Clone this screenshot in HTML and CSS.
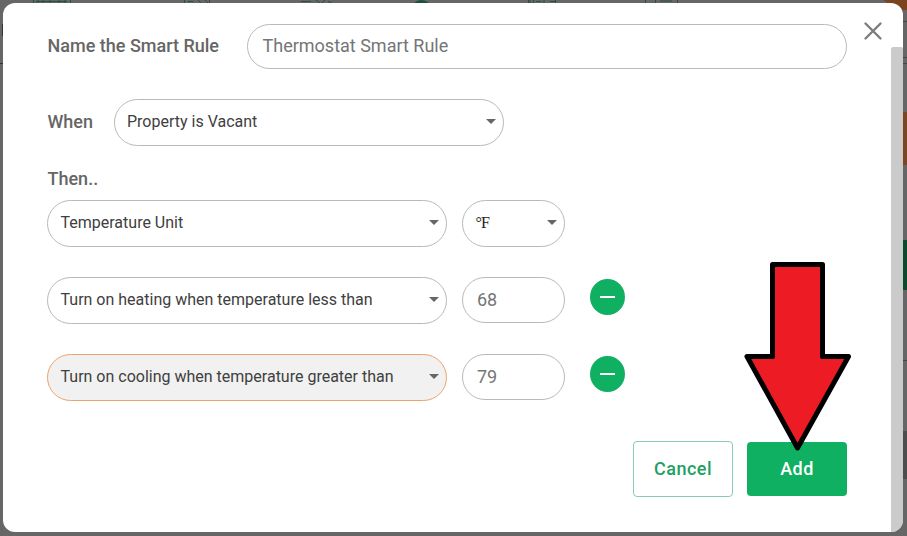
FILE: index.html
```html
<!DOCTYPE html>
<html lang="en">
<head>
    <meta charset="UTF-8">
    <meta name="viewport" content="width=device-width, initial-scale=1.0">
    <title>Smart Rule</title>
    <link rel="stylesheet" href="styles.css">
</head>
<body>

    <!-- Dimmed page behind the modal -->
    <svg class="backdrop" width="907" height="536" viewBox="0 0 907 536">
        <g fill="none" stroke="#28503f" stroke-width="1">
            <path d="M33.500 0V3M36 1.500H67M38 0V3M43 0V3M50 0V3M59 0V3M65 0V3M70.500 0V3"/>
            <path d="M184.500 0V3M188 1.500H193M198 0L201 3M205 0L208 3M209.500 0V3"/>
            <path d="M301 1.500H311M316 0L320 3M325 0L322 3M328 1.500L332 3"/>
            <path d="M528.500 0V3M530 0V3M533.500 0V3M536 1.500H541M544 0V3M550 1.500H556M555.500 0V3"/>
            <path d="M645.500 0V3M655.500 0V3M660 1H672M677.500 0V3"/>
        </g>
        <path d="M414 3Q421-3 429 3Z" fill="#1d5039"/>
        <path d="M883 0H907V10H898Z" fill="#7b4421"/>
        <path d="M2 24H3V36H2ZM0 63H3V64H0Z" fill="#333"/>
        <path d="M903 21H907V22H903ZM903 57H907V58H903ZM903 63H907V64H903ZM903 360H907V361H903Z" fill="#444"/>
        <rect x="903" y="112" width="4" height="53" fill="#7b4624"/>
        <rect x="903" y="240" width="4" height="50" fill="#0b4b2c"/>
        <rect x="903" y="431" width="4" height="48" fill="#4d4d4d"/>
    </svg>

    <div class="modal">
        <form class="rule-form">
            <div class="row name-row">
                <label class="label">Name the Smart Rule</label>
                <div class="field name-field">Thermostat Smart Rule</div>
            </div>

            <div class="row when-row">
                <label class="label">When</label>
                <div class="select when-select">Property is Vacant<span class="caret"></span></div>
            </div>

            <div class="label then-label">Then..</div>

            <div class="row rule-row">
                <div class="select rule-select">Temperature Unit<span class="caret"></span></div>
                <div class="select unit-select">°F<span class="caret"></span></div>
            </div>

            <div class="row rule-row">
                <div class="select rule-select">Turn on heating when temperature less than<span class="caret"></span></div>
                <div class="field value-field">68</div>
                <button type="button" class="remove-btn" aria-label="Remove"></button>
            </div>

            <div class="row rule-row">
                <div class="select rule-select focused">Turn on cooling when temperature greater than<span class="caret"></span></div>
                <div class="field value-field">79</div>
                <button type="button" class="remove-btn" aria-label="Remove"></button>
            </div>

            <div class="actions">
                <button type="button" class="btn cancel-btn">Cancel</button>
                <button type="button" class="btn add-btn">Add</button>
            </div>
        </form>

        <div class="side">
            <svg class="close" width="20" height="20" viewBox="0 0 20 20">
                <path d="M2.500 2.500L17.500 17.500M17.500 2.500L2.500 17.500"/>
            </svg>
            <div class="scrollbar"></div>
        </div>
    </div>

    <!-- Arrow pointing at the Add button -->
    <svg class="arrow" width="110" height="194" viewBox="0 0 110 194">
        <path d="M29.500 4.500H79.500V96.500H105.500L54.500 188L4 96.500H29.500Z"/>
    </svg>

</body>
</html>
```
FILE: styles.css
```css
* {
    box-sizing: border-box;
}
body {
    margin: 0;
    padding: 3px 4px 4px 3px;
    height: 536px;
    overflow: hidden;
    font-family: Roboto, "Liberation Sans", sans-serif;
    background: #666;
}
.backdrop {
    position: absolute;
    top: 0;
    left: 0;
}

/* Modal */
.modal {
    position: relative;
    display: flex;
    height: 529px;
    background: #fff;
    border-radius: 12px;
    overflow: hidden;
}
.rule-form {
    width: 844px;
    padding: 21px 0 0 44px;
}
.side {
    width: 56px;
    display: flex;
    flex-direction: column;
    align-items: flex-end;
}
.close {
    margin: 18px 20px 6px 0;
    fill: none;
    stroke: #7d7d7d;
    stroke-width: 2.4;
    stroke-linecap: round;
}
.scrollbar {
    width: 12px;
    flex: 1;
    background: #cbcbcb;
    border-radius: 2px 2px 0 0;
}

/* Form rows */
.row {
    display: flex;
    align-items: center;
}
.label {
    padding-left: 0.5px;
    font-size: 18px;
    font-weight: 500;
    line-height: 22px;
    color: #666;
}
.name-row .label {
    width: 200px;
    padding-bottom: 2px;
}
.when-row {
    margin-top: 30px;
}
.when-row .label {
    width: 67px;
    padding-bottom: 2px;
}
.then-label {
    margin: 22px 0 10px;
}
.rule-row {
    align-items: flex-start;
    height: 47px;
    margin-bottom: 30px;
}

/* Fields */
.field {
    height: 46px;
    padding: 0 15px;
    border: 1px solid #b9b9b9;
    border-radius: 23px;
    font-size: 18px;
    line-height: 43px;
    color: #757575;
}
.name-field {
    width: 600px;
    height: 45px;
    padding-left: 14.5px;
    line-height: 42px;
}
.value-field {
    width: 103px;
    margin-left: 15px;
    padding: 0 14px;
}
.select {
    display: flex;
    justify-content: space-between;
    height: 47px;
    padding: 0 7px 0 12.5px;
    border: 1px solid #b9b9b9;
    border-radius: 24px;
    font-size: 16px;
    line-height: 44px;
    color: #404040;
}
.caret {
    margin-top: 19px;
    width: 10px;
    height: 5px;
    background: #666;
    clip-path: polygon(0 0, 100% 0, 50% 100%);
}
.when-select {
    width: 390px;
    padding-left: 12px;
}
.rule-select {
    width: 400px;
}
.unit-select {
    width: 103px;
    margin-left: 15px;
    font-family: "Liberation Serif", serif;
    letter-spacing: -0.8px;
    color: #222;
}
.focused {
    background: #f1f1f1;
    border-color: #eda36c;
}
.remove-btn {
    display: flex;
    align-items: center;
    justify-content: center;
    width: 35px;
    height: 36px;
    margin: 2px 0 0 25px;
    padding: 0;
    border: none;
    border-radius: 50%;
    background: #10b062;
}
.remove-btn::before {
    content: "";
    width: 15px;
    height: 2px;
    background: #fff;
}

/* Buttons */
.actions {
    display: flex;
    align-items: center;
    justify-content: flex-end;
    margin-top: 40px;
}
.rule-row:nth-last-child(2) {
    margin-bottom: 0;
}
.btn {
    width: 100px;
    padding: 0 0 1px;
    border-radius: 4px;
    font-family: inherit;
    font-size: 18px;
    font-weight: 500;
    letter-spacing: 0.5px;
}
.cancel-btn {
    height: 56px;
    border: 1px solid #86cdb2;
    background: #fff;
    color: #239f65;
}
.add-btn {
    height: 54px;
    margin-left: 14px;
    border: none;
    background: #10b062;
    color: #fff;
}

/* Arrow */
.arrow {
    position: absolute;
    left: 743px;
    top: 260px;
    fill: #ed1c24;
    stroke: #000;
    stroke-width: 5;
    stroke-linejoin: round;
}
```
